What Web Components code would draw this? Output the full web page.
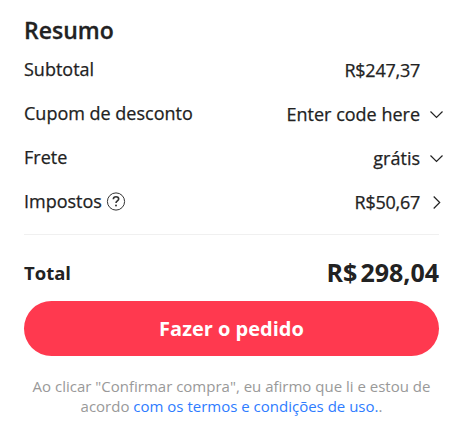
<!DOCTYPE html>
<html lang="pt-BR">
<head>
<meta charset="UTF-8">
<meta name="viewport" content="width=device-width, initial-scale=1.0">
<title>Resumo</title>
<style>
    body {
        margin: 0;
        background: #fff;
        color: #222;
        font-family: "Open Sans", "Noto Sans", sans-serif;
    }
</style>
</head>
<body>
<order-summary>
    <span slot="title">Resumo</span>
    <summary-row>Subtotal<span slot="value" class="price">R$247,37</span></summary-row>
    <summary-row arrow="down">Cupom de desconto<span slot="value">Enter code here</span></summary-row>
    <summary-row arrow="down">Frete<span slot="value">grátis</span></summary-row>
    <summary-row arrow="right">Impostos<help-icon slot="help"></help-icon><span slot="value" class="price">R$50,67</span></summary-row>
    <summary-total slot="total">Total<span slot="currency">R$</span><span slot="amount">298,04</span></summary-total>
    <pay-button slot="action">Fazer o pedido</pay-button>
    <legal-note slot="note">Ao clicar "Confirmar compra", eu afirmo que li e estou de acordo <a slot="link">com os termos e condições de uso.</a></legal-note>
</order-summary>

<script>
class OrderSummary extends HTMLElement {
    connectedCallback() {
        this.attachShadow({ mode: 'open' });
        this.shadowRoot.innerHTML = `
            <style>
                :host {
                    display: block;
                    padding: 14px 20px 0 24px;
                }
                h2 {
                    margin: 0;
                    font-size: 23px;
                    font-weight: 600;
                    line-height: 33px;
                    -webkit-text-stroke: 0.3px #222;
                }
                .rows {
                    display: flex;
                    flex-direction: column;
                    padding-bottom: 11px;
                    border-bottom: 1px solid #f0f0f0;
                }
            </style>
            <h2><slot name="title"></slot></h2>
            <div class="rows"><slot></slot></div>
            <slot name="total"></slot>
            <slot name="action"></slot>
            <slot name="note"></slot>
        `;
    }
}

class SummaryRow extends HTMLElement {
    connectedCallback() {
        const arrows = {
            down: '<path d="M2.5 5.5 8.5 11.5 14.5 5.5"/>',
            right: '<path d="M5.7 2.5 11.7 8.5 5.7 14.5"/>'
        };
        this.attachShadow({ mode: 'open' });
        this.shadowRoot.innerHTML = `
            <style>
                :host {
                    display: flex;
                    align-items: center;
                    height: 44px;
                    font-size: 18px;
                    line-height: 24px;
                    -webkit-text-stroke: 0.25px #222;
                }
                .label {
                    display: flex;
                    align-items: center;
                    gap: 4px;
                    flex: 1;
                }
                .value {
                    padding-top: 2px;
                }
                ::slotted(.price) {
                    letter-spacing: -0.25px;
                }
                .arrow {
                    display: flex;
                    width: 19px;
                    padding: 2px 0 0 8px;
                    margin-right: -8px;
                }
                svg {
                    width: 17px;
                    height: 17px;
                    fill: none;
                    stroke: #222;
                    stroke-width: 1.2;
                }
            </style>
            <div class="label"><slot></slot><slot name="help"></slot></div>
            <div class="value"><slot name="value"></slot></div>
            <div class="arrow"><svg viewBox="0 0 17 17">${arrows[this.getAttribute('arrow')] || ''}</svg></div>
        `;
    }
}

class HelpIcon extends HTMLElement {
    connectedCallback() {
        this.attachShadow({ mode: 'open' });
        this.shadowRoot.innerHTML = `
            <style>
                :host {
                    display: flex;
                }
                svg {
                    width: 20px;
                    height: 20px;
                    fill: none;
                    stroke: #333;
                }
            </style>
            <svg viewBox="0 0 20 20">
                <circle cx="10" cy="10.5" r="8.6" stroke-width="1"/>
                <path d="M7.3 8.2C7.4 6.5 8.4 5.7 10 5.7s2.7.9 2.7 2.3c0 1.9-2.7 2-2.7 4" stroke-width="1.6"/>
                <circle cx="10" cy="14.6" r="1" fill="#333" stroke="none"/>
            </svg>
        `;
    }
}

class SummaryTotal extends HTMLElement {
    connectedCallback() {
        this.attachShadow({ mode: 'open' });
        this.shadowRoot.innerHTML = `
            <style>
                :host {
                    display: flex;
                    align-items: center;
                    justify-content: space-between;
                    height: 66px;
                    font-size: 18.5px;
                    font-weight: 700;
                }
                .label {
                    padding-top: 8px;
                }
                .price {
                    display: flex;
                    gap: 3px;
                    padding-top: 8px;
                    font-size: 25px;
                    line-height: 34px;
                }
            </style>
            <div class="label"><slot></slot></div>
            <div class="price"><slot name="currency"></slot><slot name="amount"></slot></div>
        `;
    }
}

class PayButton extends HTMLElement {
    connectedCallback() {
        this.attachShadow({ mode: 'open' });
        this.shadowRoot.innerHTML = `
            <style>
                :host {
                    display: block;
                }
                button {
                    display: block;
                    width: 100%;
                    height: 55px;
                    padding: 0;
                    border: 0;
                    border-radius: 28px;
                    background: #ff394f;
                    color: #fff;
                    font: 700 20px/55px "Open Sans", "Noto Sans", sans-serif;
                }
            </style>
            <button type="button"><slot></slot></button>
        `;
    }
}

class LegalNote extends HTMLElement {
    connectedCallback() {
        this.attachShadow({ mode: 'open' });
        this.shadowRoot.innerHTML = `
            <style>
                :host {
                    display: block;
                    padding-top: 20px;
                    color: #999;
                    font-size: 15px;
                    line-height: 20px;
                    text-align: center;
                }
                ::slotted(a) {
                    color: #2e7cff;
                }
            </style>
            <slot></slot><slot name="link"></slot>.
        `;
    }
}

customElements.define('order-summary', OrderSummary);
customElements.define('summary-row', SummaryRow);
customElements.define('help-icon', HelpIcon);
customElements.define('summary-total', SummaryTotal);
customElements.define('pay-button', PayButton);
customElements.define('legal-note', LegalNote);
</script>
</body>
</html>
